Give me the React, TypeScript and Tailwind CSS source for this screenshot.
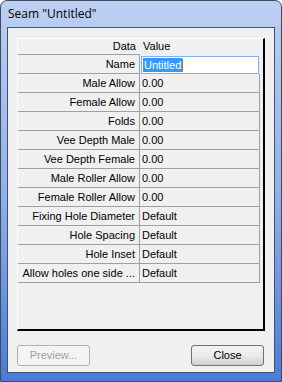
import React from "react";

const ROWS: [string, string][] = [
  ["Male Allow", "0.00"],
  ["Female Allow", "0.00"],
  ["Folds", "0.00"],
  ["Vee Depth Male", "0.00"],
  ["Vee Depth Female", "0.00"],
  ["Male Roller Allow", "0.00"],
  ["Female Roller Allow", "0.00"],
  ["Fixing Hole Diameter", "Default"],
  ["Hole Spacing", "Default"],
  ["Hole Inset", "Default"],
  ["Allow holes one side ...", "Default"],
];

const grid = { fontFamily: "Tahoma, 'Liberation Sans', Arial, sans-serif" };

function Row({ label, children }: { label: string; children: React.ReactNode }) {
  return (
    <div className="flex h-[19px]">
      <div className="w-[122px] shrink-0 border-b border-r border-[#a0a0a0] bg-[#f0f0f0] pr-[4px] text-right leading-[18px]">
        {label}
      </div>
      {children}
    </div>
  );
}

export default function App() {
  return (
    <div className="h-[382px] w-[282px] overflow-hidden rounded-t-[7px] border border-[#3f4a60] bg-gradient-to-b from-[#bcd0f1] via-[#92b1e8] to-[#4a7bd4] flex flex-col">
      <div
        className="h-[26px] shrink-0 pl-[7px] pt-[5px] text-[12px] leading-[15px] text-black"
        style={{ fontFamily: "'Segoe UI', 'Open Sans', 'Liberation Sans', sans-serif" }}
      >
        Seam "Untitled"
      </div>

      <div className="mx-[6px] mb-[8px] flex flex-1 flex-col border border-[#3e5170] bg-[#f0f0f0] px-[9px] pt-[10px] pb-[6px] text-[11px] text-black" style={grid}>
        <div className="h-[293px] border-l border-t border-white border-r-2 border-b-2 border-r-black border-b-black bg-[#f0f0f0]">
          <div className="flex h-[15px] leading-[14px]">
            <div className="w-[122px] pr-[4px] text-right">Data</div>
            <div className="pl-[3px]">Value</div>
          </div>
          <div className="w-[122px] border-b border-[#a0a0a0]" />
          <div className="flex h-[19px]">
            <div className="w-[122px] shrink-0 border-b border-r border-[#a0a0a0] pr-[4px] text-right leading-[18px]">
              Name
            </div>
            <div className="ml-[1px] mt-[1px] flex h-[18px] w-[118px] items-center border border-[#7eb4ea] bg-white pl-[1px]">
              <span className="bg-[#3399ff] px-[1px] leading-[14px] text-white">Untitled</span>
              <span className="h-[13px] w-[1px] bg-[#d07020]" />
            </div>
          </div>
          {ROWS.map(([label, value]) => (
            <Row key={label} label={label}>
              <div className="w-[120px] shrink-0 border-b border-r border-[#a0a0a0] pl-[2px] leading-[18px]">
                {value}
              </div>
            </Row>
          ))}
        </div>

        <div className="mt-auto flex justify-between pr-[1px]">
          <button className="h-[21px] w-[73px] rounded-[3px] border border-[#adb2b5] bg-[#f4f4f4] text-[11px] text-[#a0a0a0]">
            Preview...
          </button>
          <button className="h-[21px] w-[73px] rounded-[3px] border border-[#707070] bg-gradient-to-b from-[#f2f2f2] via-[#ebebeb] to-[#cfcfcf] text-[11px] text-black">
            Close
          </button>
        </div>
      </div>
    </div>
  );
}
